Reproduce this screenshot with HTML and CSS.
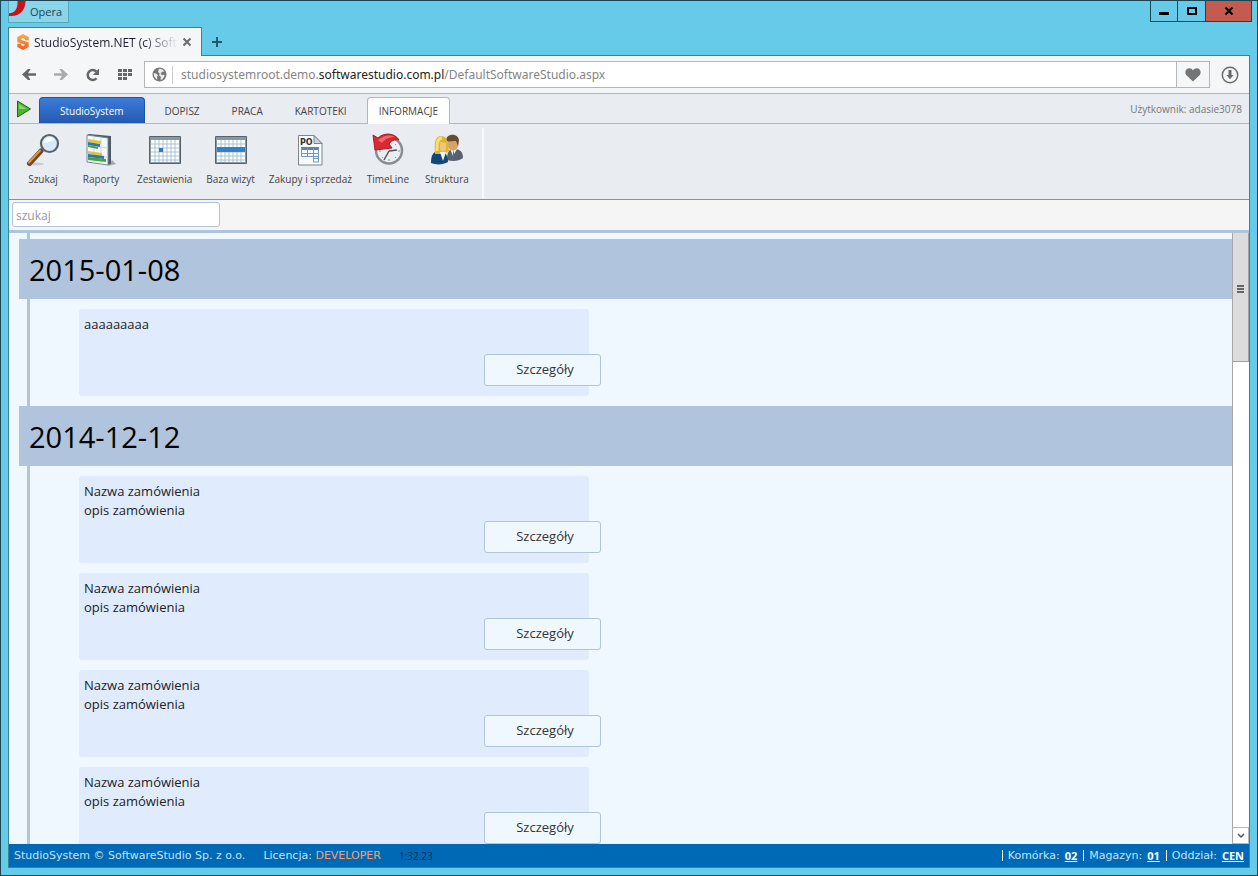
FILE: index.html
```html
<!DOCTYPE html>

<html lang="pl">

<head>
  <meta charset="utf-8">
  <title>StudioSystem.NET (c) SoftwareStudio</title>
  <link rel="stylesheet" href="styles.css">
</head>

<body>
  <header class="titlebar">
    <button class="menu" type="button">
      <svg width="18" height="16" viewBox="0 0 18 16"><path d="M8.500 0H16.500C16.500 8 12 16 0 15V12.300C6 12.500 9 7 8.500 0z" fill="#cb1219"/></svg>
      Opera
    </button>
    <div class="windowButtons">
      <button type="button" aria-label="Minimalizuj"><svg width="12" height="10" viewBox="0 0 12 10"><path d="M1 6h10v3H1z"/></svg></button>
      <button type="button" aria-label="Maksymalizuj"><svg width="12" height="10" viewBox="0 0 12 10"><path d="M2 2h8v6H2z" fill="none" stroke="#000" stroke-width="2"/></svg></button>
      <button class="close" type="button" aria-label="Zamknij"><svg width="12" height="10" viewBox="0 0 12 10"><path d="M2.500 1.500l7 7M9.500 1.500l-7 7" stroke="#000" stroke-width="2.200"/></svg></button>
    </div>
  </header>

  <div class="browserTabs">
    <div class="browserTab">
      <svg width="12" height="16" viewBox="0 0 12 16">
        <defs><linearGradient id="logo" x2="0" y2="1"><stop stop-color="#fbb040"/><stop offset="1" stop-color="#f15a29"/></linearGradient></defs>
        <path d="M6 0l5.700 3v3.200H8V5L6 4 4 5v.8l7.700 2.700V13L6 16 .3 13V9.800H4V11l2 1 2-1v-.3L.3 8V3z" fill="url(#logo)"/>
      </svg>
      <span class="tabTitle">StudioSystem.NET (c) Soft</span>
      <button type="button" aria-label="Zamknij kartę"><svg width="10" height="10" viewBox="0 0 10 10"><path d="M1.500 1.500l7 7M8.500 1.500l-7 7" stroke="#6b6b6b" stroke-width="2"/></svg></button>
    </div>
    <button class="newTab" type="button" aria-label="Nowa karta"><svg width="10" height="10" viewBox="0 0 10 10"><path d="M5 0v10M0 5h10" stroke="#245a6c" stroke-width="2"/></svg></button>
  </div>

  <main class="window">
    <nav class="toolbar">
      <button type="button" aria-label="Wstecz"><svg width="16" height="16" viewBox="0 0 16 16"><path d="M1 7.500L7 2h2.500L7 6.200h8v2.600H7L9.500 13H7z" fill="#666"/></svg></button>
      <button type="button" aria-label="Dalej"><svg width="16" height="16" viewBox="0 0 16 16"><path d="M15 7.500L9 2H6.500L9 6.200H1v2.600h8L6.500 13H9z" fill="#aaa"/></svg></button>
      <button type="button" aria-label="Odśwież"><svg width="16" height="16" viewBox="0 0 16 16"><path d="M11.500 11.300A5 5 0 1 1 11.300 4.500" fill="none" stroke="#666" stroke-width="2.500"/><path d="M14 1.500V8H7.800z" fill="#666"/></svg></button>
      <button type="button" aria-label="Speed Dial"><svg width="16" height="16" viewBox="0 0 16 16"><path d="M1 2h4v3H1zM6 2h4v3H6zM11 2h4v3h-4zM1 6h4v3H1zM6 6h4v3H6zM11 6h4v3h-4zM1 10h4v3H1zM6 10h4v3H6z" fill="#666"/></svg></button>
      <div class="address">
        <svg width="15" height="15" viewBox="0 0 15 15"><circle cx="7.500" cy="7.500" r="7" fill="#777"/><path d="M7 1.800l3.500.7 2 2L10 4.800 8.500 7l1.800 1.200 1.700-.7.600 1.500-2.300 3.500-1.800.3.500-2.800L7.200 8.500l.3-2.300L6 5zM1.800 6l2.700.8L6 8.500l-1 1.300.3 2.900C3 11.500 1.500 9 1.800 6z" fill="#eee"/></svg>
        <span class="url">studiosystemroot.demo.<b>softwarestudio.com.pl</b>/DefaultSoftwareStudio.aspx</span>
        <button class="heart" type="button" aria-label="Dodaj do zakładek"><svg width="16" height="14" viewBox="0 0 16 14"><path d="M8 13.500L1.200 7C-.8 4 1 .3 4.300.3 6 .3 7.300 1.200 8 2.500 8.700 1.200 10 .3 11.700.3 15 .3 16.800 4 14.800 7z" fill="#757575"/></svg></button>
      </div>
      <button class="download" type="button" aria-label="Pobrane"><svg width="18" height="18" viewBox="0 0 18 18"><circle cx="9" cy="9" r="7.700" fill="none" stroke="#6b6b6b" stroke-width="1.500"/><path d="M7.500 4h3v5h2L9 13.300 5.500 9h2z" fill="#6b6b6b"/></svg></button>
    </nav>

    <nav class="sections">
      <svg class="play" width="16" height="18" viewBox="0 0 16 18"><path d="M1.500 1L14.500 9 1.500 17z" fill="#4db52c" stroke="#24611a" stroke-linejoin="round"/><path d="M3 4L11 9H3z" fill="#83d763"/></svg>
      <a class="system" href="#">StudioSystem</a>
      <a href="#">DOPISZ</a>
      <a href="#">PRACA</a>
      <a href="#">KARTOTEKI</a>
      <a class="active" href="#">INFORMACJE</a>
      <span class="user">Użytkownik: adasie3078</span>
    </nav>

    <div class="ribbon">
      <a href="#">
        <svg width="34" height="34" viewBox="0 0 34 34"><ellipse cx="10" cy="31" rx="8" ry="1.500" fill="#c9ccd1"/><path d="M3.500 30.500L15 18" stroke="#74481f" stroke-width="5" stroke-linecap="round"/><path d="M3 29.500L14 17.500" stroke="#d59a55" stroke-width="2" stroke-linecap="round"/><circle cx="23.500" cy="10.500" r="8.500" fill="#d5eaff" stroke="#59626e" stroke-width="2.200"/><path d="M17.500 10a6 6 0 0 1 11-3c-3 0-6 3-11 3z" fill="#fff"/></svg>
        Szukaj
      </a>
      <a href="#">
        <svg width="34" height="34" viewBox="0 0 34 34"><path d="M24 33l8-2-4-4z" fill="#aaa"/><path d="M3 2l2-1 22 2v28l-3 1z" fill="#4d5c66"/><path d="M3 2l21 3v27L3 29z" fill="#f4f8fb" stroke="#788891"/><path d="M10 3v27M17 4v27M3 13l21 2M3 22l21 2" stroke="#cad7df"/><path d="M4 6l13 2v3L4 9zM4 18l14 2v3L4 21z" fill="#e2c43b"/><path d="M4 9l12 2v3L4 12zM4 21l16 2v3L4 24z" fill="#2c75bd"/><path d="M4 12l10 2v2L4 14zM4 24l18 2v3L4 27z" fill="#40a63d"/></svg>
        Raporty
      </a>
      <a href="#">
        <svg width="34" height="34" viewBox="0 0 34 34"><path d="M1.500 3.500h31v27h-31z" fill="#8c98a1" stroke="#56636e"/><path d="M3 7h28v22H3z" fill="#fff"/><path d="M3 11h28M3 15h28M3 19h28M3 23h28M3 27h28M7 7v22M11 7v22M15 7v22M19 7v22M23 7v22M27 7v22" stroke="#a9c2cf"/><path d="M11 15h4v4h-4z" fill="#2d7ab9"/></svg>
        Zestawienia
      </a>
      <a href="#">
        <svg width="34" height="34" viewBox="0 0 34 34"><path d="M1.500 3.500h31v27h-31z" fill="#8c98a1" stroke="#56636e"/><path d="M3 7h28v22H3z" fill="#fff"/><path d="M3 11h28M3 15h28M3 19h28M3 23h28M3 27h28M7 7v22M11 7v22M15 7v22M19 7v22M23 7v22M27 7v22" stroke="#a9c2cf"/><path d="M3 14h28v5H3z" fill="#3182c4"/></svg>
        Baza wizyt
      </a>
      <a href="#">
        <svg width="34" height="34" viewBox="0 0 34 34"><path d="M5.500 2.500H21l8 8v21.500H5.500z" fill="#f8fafb" stroke="#7a858c"/><path d="M21 2.500v8h8z" fill="#cbd4da" stroke="#7a858c"/><text x="7" y="12" class="po">PO</text><path d="M8 14h18v3H8z" fill="#5785ac"/><path d="M8.500 14.500v9h17v-9M8 20.500h18M14.500 15v9M20.500 15v14h5v-9M20 25.500h6" fill="none" stroke="#7298b5"/></svg>
        Zakupy i sprzedaż
      </a>
      <a href="#">
        <svg width="34" height="34" viewBox="0 0 34 34"><circle cx="18" cy="17.500" r="13" fill="#e9eef2" stroke="#888e93" stroke-width="2.500"/><path d="M18 8v2M18 26v2M8 18h2M27 18h2M25 11l-1 1M11 25l1-1M25 25l-1-1" stroke="#8a9298"/><path d="M18 18l-5 9M18 18l8-1" stroke="#4d5357" stroke-width="1.500"/><path d="M4 17L2 2l5 3C13-1 24 0 28 7c-5-1-8 1-10 4l3 4z" fill="#da2930" stroke="#a91b24"/><path d="M4 5l3 2c5-4 11-6 17-3-6 0-10 2-13 6z" fill="#f0686a"/></svg>
        TimeLine
      </a>
      <a href="#">
        <svg width="34" height="34" viewBox="0 0 34 34"><path d="M17 27c0-8 2-11 7-11 6 0 9 3 9 9-4 3-10 4-16 2z" fill="#58616d"/><path d="M20 16l3 7 4-7z" fill="#e5edf6"/><path d="M23 17l2 6-2 3z" fill="#3471ac"/><ellipse cx="23" cy="11" rx="5.500" ry="6.500" fill="#d5a36a"/><path d="M16 8c0-8 12-8 13-1l-1 6-2-5c-3 0-7 1-10 0z" fill="#654c32"/><path d="M1 30c0-9 3-12 8-12s9 3 9 11c-5 3-12 3-17 1z" fill="#124878"/><path d="M5 21C4 10 5 3 11 3c7 0 7 8 8 15l-4 3z" fill="#e0b52e"/><path d="M10 9l6 1v6c-2 4-5 3-6 0z" fill="#efc47b"/><path d="M10 19l3 9 3-9z" fill="#f1f5f7"/><path d="M7 18c0-7 0-13 5-13" fill="none" stroke="#f5df76" stroke-width="3"/></svg>
        Struktura
      </a>
    </div>

    <form class="search">
      <input type="text" placeholder="szukaj" aria-label="szukaj">
    </form>

    <div class="content">
      <div class="timeline">
        <h2>2015-01-08</h2>
        <div class="entry">
          <p>aaaaaaaaa</p>
          <button type="button">Szczegóły</button>
        </div>

        <h2>2014-12-12</h2>
        <div class="entry">
          <p>Nazwa zamówienia<br>opis zamówienia</p>
          <button type="button">Szczegóły</button>
        </div>
        <div class="entry">
          <p>Nazwa zamówienia<br>opis zamówienia</p>
          <button type="button">Szczegóły</button>
        </div>
        <div class="entry">
          <p>Nazwa zamówienia<br>opis zamówienia</p>
          <button type="button">Szczegóły</button>
        </div>
        <div class="entry">
          <p>Nazwa zamówienia<br>opis zamówienia</p>
          <button type="button">Szczegóły</button>
        </div>
      </div>
      <div class="scrollbar">
        <div class="thumb"><svg width="7" height="8" viewBox="0 0 7 8"><path d="M0 0h7v2H0zM0 3h7v2H0zM0 6h7v2H0z" fill="#666"/></svg></div>
        <div class="down"><svg width="8" height="6" viewBox="0 0 8 6"><path d="M1 1l3 3 3-3" fill="none" stroke="#555" stroke-width="1.500"/></svg></div>
      </div>
    </div>

    <footer class="status">
      <span>StudioSystem © SoftwareStudio Sp. z o.o.</span>
      <span class="licence">Licencja: <span class="developer">DEVELOPER</span></span>
      <span class="time">1:32.23</span>
      <ul>
        <li>Komórka: <a href="#">02</a></li>
        <li>Magazyn: <a href="#">01</a></li>
        <li>Oddział: <a href="#">CEN</a></li>
      </ul>
    </footer>
  </main>
</body>

</html>
```

FILE: styles.css
```css
* {
  box-sizing: border-box;
}

body {
  background-color: #66cae9;
  border: 1px solid #1c4553;
  display: flex;
  flex-direction: column;
  font-family: "Open Sans", "Noto Sans", sans-serif;
  font-size: 13px;
  height: 100vh;
  margin: 0;
  overflow: hidden;
  padding: 0 7px 7px;
}

button {
  align-items: center;
  background: none;
  border: 0;
  color: inherit;
  display: flex;
  font: inherit;
  justify-content: center;
  padding: 0;
}

a {
  color: inherit;
  text-decoration: none;
}

svg {
  display: block;
  flex: none;
}

/* window frame */

.titlebar {
  align-items: flex-start;
  display: flex;
  height: 26px;
  justify-content: space-between;
}

.menu {
  align-items: flex-start;
  background-color: #8ad5ea;
  border: 1px solid #56a6bd;
  border-top: 0;
  color: #1d4552;
  font-size: 11px;
  gap: 3px;
  height: 22px;
  line-height: 22px;
  padding-right: 6px;
}

.windowButtons {
  display: flex;
  margin-right: -2px;
}

.windowButtons button {
  border: 1px solid #1c4553;
  border-top: 0;
  height: 21px;
  width: 28px;
}

.windowButtons button + button {
  border-left: 0;
}

.windowButtons .close {
  background-color: #c45a50;
  width: 46px;
}

.browserTabs {
  display: flex;
  height: 29px;
  position: relative;
}

.browserTab {
  align-items: center;
  background-color: #f5f6f8;
  border: 1px solid #3e8297;
  border-bottom: 0;
  display: flex;
  height: 29px;
  padding: 0 9px 0 8px;
  width: 194px;
}

.tabTitle {
  color: #221c35;
  flex: 1;
  font-size: 12px;
  margin: 0 3px 0 5px;
  mask-image: linear-gradient(to right, #000 75%, transparent);
  white-space: nowrap;
}

.newTab {
  width: 30px;
}

.window {
  background-color: #f5f6f8;
  border: 1px solid #3e8297;
  display: flex;
  flex: 1;
  flex-direction: column;
  margin-top: -1px;
  min-height: 0;
}

/* address bar */

.toolbar {
  align-items: center;
  border-bottom: 1px solid #b4b6ba;
  display: flex;
  flex: none;
  gap: 16px;
  height: 38px;
  padding: 0 10px 0 12px;
}

.address {
  align-items: center;
  background-color: #fff;
  border: 1px solid #b4b6ba;
  display: flex;
  flex: 1;
  height: 27px;
  margin: 0 -5px;
  padding-left: 7px;
}

.url {
  border-left: 1px solid #ccc;
  color: #858585;
  flex: 1;
  font-family: "Noto Sans", sans-serif;
  font-size: 12px;
  line-height: 18px;
  margin-left: 5px;
  padding-left: 8px;
}

.url b {
  color: #222;
  font-weight: normal;
}

.heart {
  background-color: #f5f6f8;
  border-left: 1px solid #b4b6ba;
  height: 100%;
  width: 33px;
}

/* application menu */

.sections {
  align-items: flex-end;
  background-color: #e9ecf1;
  border-bottom: 1px solid #b4b6ba;
  color: #444;
  display: flex;
  flex: none;
  font-size: 10px;
  gap: 8px;
  height: 30px;
  padding: 0 7px;
}

.play {
  align-self: center;
}

.sections a {
  border: 1px solid transparent;
  border-bottom: 0;
  border-radius: 4px 4px 0 0;
  height: 26px;
  line-height: 27px;
  padding: 0 11px;
}

.sections .system {
  background-image: linear-gradient(#3c7cd8, #2459b0);
  border-color: #2354a0;
  color: #fff;
  padding: 0 20px;
  margin-left: -1px;
}

.sections .active {
  background-color: #fff;
  border-color: #b4b6ba;
  margin-bottom: -1px;
  height: 27px;
}

.user {
  color: #777;
  line-height: 28px;
  margin-left: auto;
}

.ribbon {
  background-color: #e9ecf1;
  border-bottom: 1px solid #8c8f96;
  color: #444;
  display: flex;
  flex: none;
  font-size: 10px;
  height: 76px;
  padding: 4px 5px 0;
}

.ribbon a {
  align-items: center;
  display: flex;
  flex-direction: column;
  gap: 2px;
  line-height: 20px;
  min-width: 58px;
  padding: 5px 7px 0;
}

.ribbon a:last-child {
  border-right: 2px solid #f8f9fa;
  min-width: 67px;
  padding-right: 12px;
}

.po {
  fill: #333;
  font-family: "DejaVu Sans", sans-serif;
  font-size: 8px;
  font-weight: bold;
}

.search {
  background-color: #f5f5f5;
  border-bottom: 3px solid #b0c4de;
  flex: none;
  height: 33px;
  padding: 2px 3px;
}

.search input {
  border: 1px solid #b0c4de;
  border-radius: 3px;
  display: block;
  font: inherit;
  font-size: 12px;
  height: 25px;
  padding: 2px 3px 0;
  width: 208px;
}

.search input::placeholder {
  color: #9a9a9a;
}

/* timeline */

.content {
  background-color: #f0f8ff;
  display: flex;
  flex: 1;
  min-height: 0;
}

.timeline {
  background: linear-gradient(#b0c4de, #b0c4de) 18px 0 / 3px 100% no-repeat;
  flex: 1;
  overflow: hidden;
  padding: 6px 0 0 10px;
}

h2 {
  background-color: #b0c4de;
  font-size: 29px;
  font-weight: normal;
  height: 60px;
  line-height: 62px;
  margin: 0 0 10px;
  padding: 0 10px;
}

.entry {
  background-color: #e0ecfe;
  border-radius: 3px;
  display: flex;
  flex-direction: column;
  margin: 0 0 10px 60px;
  min-height: 87px;
  padding: 6px 0 10px 5px;
  width: 510px;
}

.entry p {
  color: #222;
  line-height: 19px;
  margin: 0;
}

.entry button {
  align-self: flex-end;
  background-color: #f0f8ff;
  border: 1px solid #b0c4de;
  border-radius: 3px;
  color: #333;
  height: 32px;
  margin: auto -12px 0 0;
  padding: 0 0 2px 5px;
  width: 117px;
}

.scrollbar {
  background-color: #fff;
  border-left: 1px solid #a8a8a8;
  display: flex;
  flex-direction: column;
  justify-content: space-between;
  width: 17px;
}

.thumb {
  align-items: center;
  background-color: #dcdcdc;
  border: 1px solid #a0a0a0;
  border-width: 0 1px 1px 0;
  display: flex;
  height: 129px;
  justify-content: center;
  padding-bottom: 16px;
}

.down {
  align-items: center;
  border: 1px solid #b8b8b8;
  border-left: 0;
  display: flex;
  height: 17px;
  justify-content: center;
}

.status {
  align-items: center;
  background-color: #0069b5;
  color: #c4e2fa;
  display: flex;
  flex: none;
  font-family: "DejaVu Sans", sans-serif;
  font-size: 11px;
  height: 23px;
  padding: 0 5px;
}

.licence {
  margin-left: 18px;
}

.developer {
  color: #f0a070;
}

.time {
  color: #0b2c49;
  font-family: "Open Sans", sans-serif;
  font-size: 10px;
  margin-left: 18px;
}

.status ul {
  display: flex;
  gap: 6px;
  list-style: none;
  margin: 0 0 0 auto;
  padding: 0;
}

.status li {
  align-items: center;
  display: flex;
  gap: 5px;
}

.status li::before {
  background-color: #fff;
  content: "";
  height: 11px;
  width: 1px;
}

.status li a {
  color: #fff;
  font-family: "Open Sans", sans-serif;
  font-weight: bold;
  text-decoration: underline;
}
```
